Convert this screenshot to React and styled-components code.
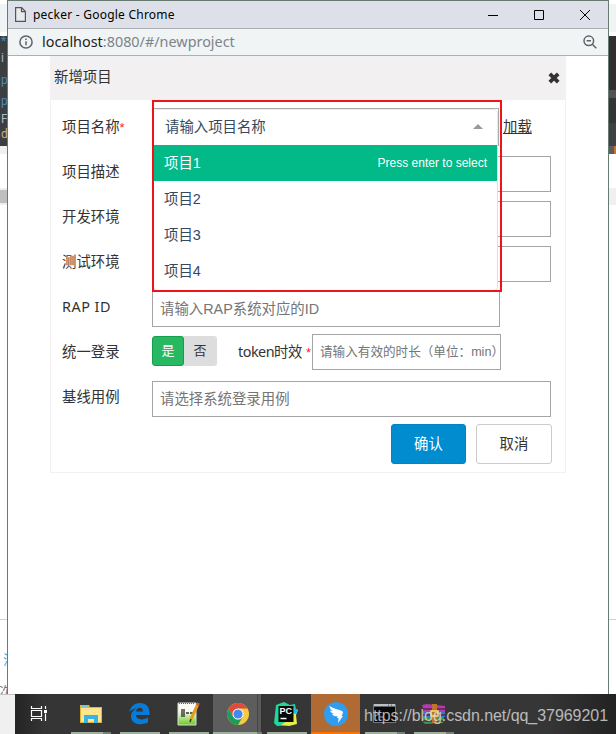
import React from "react";
import styled, { createGlobalStyle } from "styled-components";

const Global = createGlobalStyle`
  * { box-sizing: border-box; }
  body { margin: 0; background: #fff; overflow: hidden; }
  input, button { font-family: inherit; margin: 0; }
`;

const Desktop = styled.div`
  position: relative;
  width: 616px;
  height: 734px;
  display: grid;
  grid-template-columns: 7px 602px 7px;
  grid-template-rows: 694px 40px;
  overflow: hidden;
  font-family: "Noto Sans", "Noto Sans CJK SC", sans-serif;
  color: #333;
`;

const Strip = styled.div`
  display: flex;
  flex-direction: column;
  overflow: hidden;
`;

const Band = styled.div`
  flex: none;
  height: ${(p) => p.$h}px;
  background: ${(p) => p.$c || "#fff"};
`;

const Code = styled(Band)`
  padding-left: ${(p) => p.$x || 0}px;
  overflow: hidden;
  font: 12px/22px "Roboto", sans-serif;
  white-space: pre;
`;

const CodeLine = styled.div`
  height: ${(p) => p.$h}px;
  line-height: ${(p) => p.$h}px;
  color: ${(p) => p.$c};
`;

const Snippet = styled(Band)`
  font: 13px/18px "Noto Sans CJK SC", sans-serif;
  color: ${(p) => p.$ink};
  text-indent: ${(p) => p.$x}px;
  white-space: nowrap;
  overflow: hidden;
`;

const Window = styled.section`
  display: flex;
  flex-direction: column;
  border: 1px solid #687b70;
  border-bottom: 0;
  background: #fff;
  min-width: 0;
`;

const TitleBar = styled.header`
  height: 28px;
  flex: none;
  display: flex;
  align-items: center;
  background: #dde0e8;
  border-bottom: 1px solid #adb0b2;
  padding-left: 7px;
  color: #000;
`;

const WindowTitle = styled.span`
  flex: 1;
  margin-left: 7px;
  font-size: 12px;
  letter-spacing: 0.23px;
`;

const WindowButtons = styled.div`
  display: flex;
`;

const WindowButton = styled.span`
  width: 46px;
  height: 27px;
  display: grid;
  place-items: center;
`;

const AddressBar = styled.div`
  height: 27px;
  flex: none;
  display: flex;
  align-items: center;
  background: #f0f4f5;
  border-bottom: 1px solid #adb0b2;
  padding: 0 11px;
`;

const Url = styled.span`
  flex: 1;
  margin-left: 9px;
  font-size: 14.4px;
  line-height: 26px;
  color: #7d8488;
  b { font-weight: 400; color: #222; }
`;

const Panel = styled.main`
  width: 516px;
  height: 417px;
  margin-left: 42px;
  border: 1px solid #f2f0f1;
  border-top: 0;
`;

const PanelHeader = styled.div`
  height: 44px;
  margin: 0 -1px;
  padding: 0 6px 5px 4px;
  display: flex;
  align-items: center;
  justify-content: space-between;
  background: #f2f0f1;
  font-size: 14.4px;
  svg { margin-top: 5px; }
`;

const Form = styled.form`
  position: relative;
  padding: 5px 13px 0 11px;
`;

const Row = styled.div`
  height: 45px;
  display: flex;
  align-items: flex-start;
`;

const Label = styled.label`
  flex: none;
  width: ${(p) => p.$w || 90}px;
  line-height: 44px;
  font-size: 14.4px;
  letter-spacing: ${(p) => p.$spacing || 0}px;
  white-space: nowrap;
`;

const Required = styled.span`
  color: #f22;
  font-family: "Liberation Sans", sans-serif;
  font-size: 13px;
  letter-spacing: 0;
  margin-left: ${(p) => p.$gap || 0}px;
`;

const Field = styled.input`
  width: ${(p) => p.$w || 399}px;
  height: 36px;
  margin-top: ${(p) => p.$top || 6}px;
  padding: 0 0 0 7px;
  border: 1px solid #a5a5a5;
  border-radius: 0;
  background: #fff;
  outline: 0;
  && { font: ${(p) => p.$size || 14.4}px "Liberation Sans", "Noto Sans CJK SC", sans-serif; }
  &::placeholder { color: #757575; opacity: 1; }
`;

const Select = styled.div`
  width: 347px;
  height: 38px;
  margin-top: 3px;
  border: 1px solid #aaa;
  border-bottom: 0;
`;

const SelectBox = styled.div`
  height: 37px;
  border: 1px solid #e8e8e8;
  border-radius: 5px 5px 0 0;
  padding: 0 14px 5px 11px;
  display: flex;
  align-items: center;
  justify-content: space-between;
  font: 14.4px "Liberation Sans", "Noto Sans CJK SC", sans-serif;
  color: #35495e;
`;

const Caret = styled.i`
  border: 5px solid transparent;
  border-top: 0;
  border-bottom-color: #999;
  margin-top: 3px;
`;

const Menu = styled.ul`
  position: absolute;
  left: 102px;
  top: 45px;
  width: 345px;
  height: 146px;
  margin: 0;
  padding: 0;
  list-style: none;
  background: #fff;
  border: 1px solid #e0e0e0;
  border-top: 0;
  border-radius: 0 0 5px 5px;
`;

const Option = styled.li`
  height: 36px;
  display: flex;
  align-items: center;
  justify-content: space-between;
  padding: 0 10px 3px;
  font: 14.4px "Liberation Sans", "Noto Sans CJK SC", sans-serif;
  color: ${(p) => (p.$active ? "#fff" : "#35495e")};
  background: ${(p) => (p.$active ? "#02b988" : "transparent")};
  small { font-size: 12px; padding-top: 2px; }
`;

const Highlight = styled.div`
  position: absolute;
  left: 101px;
  top: 0;
  width: 350px;
  height: 192px;
  border: 2px solid #f01418;
`;

const LoadLink = styled.a`
  margin-left: 4px;
  line-height: 44px;
  font-size: 14.4px;
  text-decoration: underline;
`;

const Toggle = styled.div`
  display: flex;
  width: 65px;
  height: 30px;
  margin-top: 6px;
  border-radius: 3px;
  background: #ddd;
  overflow: hidden;
`;

const ToggleSide = styled.span`
  width: 32px;
  height: 30px;
  display: grid;
  place-items: center;
  font-size: 13px;
  padding-bottom: 3px;
  color: ${(p) => (p.$on ? "#fff" : "#333")};
  background: ${(p) => (p.$on ? "#28b862" : "transparent")};
  border: 1px solid ${(p) => (p.$on ? "#12a04c" : "transparent")};
  border-radius: 3px;
`;

const Spacer = styled.div`
  width: 21px;
  flex: none;
`;

const Actions = styled.div`
  display: flex;
  justify-content: flex-end;
  gap: 10px;
  padding-top: 4px;
`;

const Button = styled.button`
  width: ${(p) => (p.$primary ? 75 : 76)}px;
  height: 40px;
  padding: 0 0 3px;
  border-radius: 3px;
  font-size: 14.4px;
  border: 1px solid ${(p) => (p.$primary ? "#0284c4" : "#ccc")};
  background: ${(p) => (p.$primary ? "#008ccf" : "#fff")};
  color: ${(p) => (p.$primary ? "#fff" : "#333")};
`;

const Taskbar = styled.footer`
  grid-column: 1 / -1;
  display: flex;
`;

const Margin = styled.div`
  width: 15px;
  background: #f0f0f0;
  border-top: 1px solid #c4c4c4;
`;

const Tray = styled.div`
  position: relative;
  flex: 1;
  display: flex;
  background: linear-gradient(90deg, #242424, #353535 30px, #363636 530px, #222 601px);
`;

const Slot = styled.div`
  width: 49px;
  display: flex;
  flex-direction: column;
  align-items: center;
  justify-content: space-between;
  padding-top: 6px;
  background: ${(p) => p.$bg || "transparent"};
`;

const TaskViewSlot = styled.div`
  width: 51px;
  padding: 11px 0 0 15px;
`;

const Running = styled.div`
  display: flex;
  width: ${(p) => p.$w}px;
  height: 2px;
  background: ${(p) => p.$c || "#a0b09f"};
  border-right: ${(p) => p.$group || 0}px solid #758277;
`;

const Watermark = styled.div`
  position: absolute;
  right: 8px;
  top: 12px;
  font: 16px/20px "Liberation Sans", sans-serif;
  letter-spacing: -0.05px;
  color: rgba(225, 225, 225, 0.78);
  white-space: nowrap;
`;

const Icon = styled.svg`
  display: block;
  flex: none;
`;

const PageIcon = () => (
  <Icon width="11" height="15" viewBox="0 0 11 15" fill="#e8eaee" stroke="#555" strokeWidth="1.2">
    <path d="M.6.7h6l3.8 3.8v9.8H.6zM6.5.7v4h4" />
  </Icon>
);
const InfoIcon = () => (
  <Icon width="14" height="14" viewBox="0 0 14 14" fill="none" stroke="#5f6368" strokeWidth="1.5">
    <circle cx="7" cy="7" r="6.1" /><path d="M7 6.2v4M7 3.6v1.5" />
  </Icon>
);
const ZoomOut = () => (
  <Icon width="14" height="14" viewBox="0 0 14 14" fill="none" stroke="#5f6368" strokeWidth="1.5">
    <circle cx="5.8" cy="5.8" r="4.8" /><path d="M9.3 9.3l4 4M3.6 5.8H8" />
  </Icon>
);
const CloseX = () => (
  <Icon width="12" height="12" viewBox="0 0 12 12" stroke="#333" strokeWidth="3.8">
    <path d="M1.8 1.8l8.4 8.4M10.200 1.8l-8.4 8.4" />
  </Icon>
);

const TaskView = () => (
  <Icon width="18" height="18" viewBox="0 0 18 18" fill="none" stroke="#fff" strokeWidth="1.2">
    <path d="M1.5 1v2.5h10V1M1.5 16v-2.5h10V16M1.5 5.5h10v6h-10zM15.5 1v3M15.5 8.5V16" />
    <path d="M14 5h3v3h-3z" fill="#fff" stroke="none" />
  </Icon>
);
const Explorer = () => (
  <Icon width="22" height="26" viewBox="0 0 22 26">
    <path d="M0 5h9l1 2h12v16H0z" fill="#e3b43b" />
    <path d="M1 8h20v14H1z" fill="#ffe58b" />
    <path d="M2 5.5h5v1.5H2z" fill="#79c7d6" />
    <path d="M4 23v-8h14v8h-4v-4H8v4z" fill="#35b4e5" />
  </Icon>
);
const Edge = () => (
  <Icon width="21" height="26" viewBox="0 0 21 26">
    <path d="M0 12C2 6 6 3 11 3c6 0 9.5 4 9.5 9.5V15H7c.2 5 7.5 5.5 12 2.6v5C12 26 2 24.6 2 16.3 2 12.6 4.3 10 7.5 8.6 5 8.8 2 9.7 0 12zm7-.6h7c0-5-6.300-4.500-7 0z" fill="#087bd8" fillRule="evenodd" />
  </Icon>
);
const Notepad = () => (
  <Icon width="23" height="26" viewBox="0 0 23 26">
    <defs><linearGradient id="pad" x2="0" y2="1"><stop offset=".35" stopColor="#fbfdf5" /><stop offset="1" stopColor="#69c91e" /></linearGradient></defs>
    <path d="M1 3h18v22H1z" fill="url(#pad)" stroke="#d9ddd2" />
    <path d="M2 3.500h16" stroke="#666" strokeDasharray="1 1" />
    <path d="M5 9v8M7 9v8M9 13h3M13 13h3" stroke="#333" strokeWidth="1.4" />
    <path d="M20.500 5L14 19" stroke="#e39c20" strokeWidth="3" /><path d="M21.500 3l-1 2" stroke="#d65b50" strokeWidth="3" /><path d="M14 19l-1 3" stroke="#333" strokeWidth="1.5" />
  </Icon>
);
const Chrome = () => (
  <Icon width="24" height="27" viewBox="0 0 24 27">
    <g transform="translate(12 14)">
      <circle r="11" fill="#fbc940" />
      <path d="M0-5.500H9.530A11 11 0 0 0-9.530-5.500L-4.760 2.750 0 0z" fill="#dc4b3e" />
      <path d="M-9.530-5.500A11 11 0 0 0 0 11L4.760 2.750 0 5.500-4.760 2.750z" fill="#219b5a" />
      <circle r="5.500" fill="#fff" /><circle r="4.600" fill="#4688f1" />
    </g>
  </Icon>
);
const PyCharm = () => (
  <Icon width="25" height="27" viewBox="0 0 25 27">
    <path d="M2 5l8-3 6 3 5-1 1 6-5 15-14 1-3-3z" fill="#22d79a" />
    <path d="M19 8l5 2-2 5 1 9-8 2-8-1 9-6z" fill="#e8ed4a" /><path d="M20 8l4 2-2 4-3-1z" fill="#18b9ee" />
    <path d="M4.500 6h15v16h-15z" fill="#080808" />
    <text x="5.500" y="14" fontFamily="Liberation Sans" fontWeight="700" fontSize="9" fill="#fff">PC</text>
    <path d="M6.500 18.500h6" stroke="#fff" strokeWidth="1.5" />
  </Icon>
);
const Ding = () => (
  <Icon width="24" height="27" viewBox="0 0 24 27">
    <circle cx="12" cy="14" r="12" fill="#2f9df0" />
    <path d="M5.500 6c3 2.500 8 3.200 12.500 5 1.500.8 1 2.200-.5 5h1.500l-5 7 .6-5H13l.5-2c-3 .8-4.500-.2-5.500-2.200l3 .3c-2.700-.8-4.500-2-5-3.700l3 .8C7 9.800 5.700 8.500 5.500 6z" fill="#fff" />
  </Icon>
);
const Terminal = () => (
  <Icon width="23" height="26" viewBox="0 0 23 26">
    <path d="M.5 4.500h22v18H.5z" fill="#080808" stroke="#777" /><path d="M1 4h21v2.500H1z" fill="#bcc1c5" />
    <path d="M15 5.300h1M18 5.300h1" stroke="#4b78a0" strokeWidth="1.500" /><path d="M2 12l4 2-4 2M7 17h4" stroke="#999" fill="none" />
  </Icon>
);
const Rar = () => (
  <Icon width="24" height="27" viewBox="0 0 24 27">
    <path d="M0 5l5-1 18 2v5H2z" fill="#b03da8" /><path d="M1 11h22v6H1z" fill="#3479c5" />
    <path d="M1 17h21l-1 6-18 1-3-3z" fill="#3b9c43" /><path d="M1 9h22M1 15h22M1 21h20" stroke="#651c54" strokeWidth="1.500" />
    <path d="M10 4h5v19h-5z" fill="#be742b" /><path d="M9 11h7v5H9z" fill="none" stroke="#eee36b" strokeWidth="1.500" />
  </Icon>
);

const options = ["项目1", "项目2", "项目3", "项目4"];

const TextRow = ({ label, placeholder, width, spacing }) => (
  <Row><Label $spacing={spacing}>{label}</Label><Field $w={width} placeholder={placeholder} /></Row>
);

export default function App() {
  return (
    <Desktop>
      <Global />
      <Strip>
        <Band $h={4} /><Band $h={28} $c="#f0f4f5" /><Band $h={4} />
        <Code $h={110} $c="#3c3f41" $x={1}>
          <CodeLine $h={10} $c="#4a88b5">*</CodeLine>
          <CodeLine $h={24} $c="#a9b7c6">i</CodeLine>
          <CodeLine $h={20} $c="#4a88b5">p</CodeLine>
          <CodeLine $h={22} $c="#4a88b5">p</CodeLine>
          <CodeLine $h={14} $c="#a9b7c6">F</CodeLine>
          <CodeLine $h={16} $c="#d0b090">d</CodeLine>
        </Code>
        <Band $h={8} $c="#f0f0f0" /><Band $h={34} /><Band $h={2} $c="#eee" /><Band $h={13} $c="#bfbfbf" /><Band $h={2} $c="#eee" />
        <Band $h={414} /><Band $h={1} $c="#d0d0d0" /><Band $h={30} />
        <Snippet $h={18} $ink="#2aa5e8" $x={3}>注</Snippet><Band $h={14} />
        <Snippet $h={12} $ink="#777" $x={-1}>次</Snippet>
      </Strip>
      <Window>
        <TitleBar>
          <PageIcon />
          <WindowTitle>pecker - Google Chrome</WindowTitle>
          <WindowButtons>
            <WindowButton><Icon width="10" height="10"><path d="M0 5.500h10" stroke="#000" /></Icon></WindowButton>
            <WindowButton><Icon width="10" height="10"><path d="M.5.500h9v9h-9z" stroke="#000" fill="none" /></Icon></WindowButton>
            <WindowButton><Icon width="10" height="10"><path d="M0 0l10 10M10 0L0 10" stroke="#000" /></Icon></WindowButton>
          </WindowButtons>
        </TitleBar>
        <AddressBar><InfoIcon /><Url><b>localhost</b>:8080/#/newproject</Url><ZoomOut /></AddressBar>
        <Panel>
          <PanelHeader><span>新增项目</span><CloseX /></PanelHeader>
          <Form>
            <Row>
              <Label>项目名称<Required>*</Required></Label>
              <Select><SelectBox>请输入项目名称<Caret /></SelectBox></Select>
              <LoadLink>加载</LoadLink>
            </Row>
            <TextRow label="项目描述" />
            <TextRow label="开发环境" />
            <TextRow label="测试环境" />
            <TextRow label="RAP ID" spacing={0.5} width={348} placeholder="请输入RAP系统对应的ID" />
            <Row>
              <Label>统一登录</Label>
              <Toggle><ToggleSide $on>是</ToggleSide><ToggleSide>否</ToggleSide></Toggle>
              <Spacer />
              <Label $w={74} $spacing={-0.5}>token时效<Required $gap={4}>*</Required></Label>
              <Field $w={189} $top={4} $size={12.6} placeholder="请输入有效的时长（单位：min）" />
            </Row>
            <TextRow label="基线用例" placeholder="请选择系统登录用例" />
            <Actions><Button type="button" $primary>确认</Button><Button type="button">取消</Button></Actions>
            <Menu>
              {options.map((name, i) => (
                <Option key={name} $active={i === 0}>{name}{i === 0 && <small>Press enter to select</small>}</Option>
              ))}
            </Menu>
            <Highlight />
          </Form>
        </Panel>
      </Window>
      <Strip>
        <Band $h={4} /><Band $h={28} $c="#f0f4f5" /><Band $h={4} />
        <Band $h={54} $c="#303030" /><Band $h={8} $c="#535353" /><Band $h={25} $c="#343536" />
        <Band $h={23} $c="#3e4245" /><Band $h={8} $c="linear-gradient(90deg,#5c5c5c 5px,#c8742c 5px)" /><Band $h={34} /><Band $h={17} $c="#f0f0f0" />
        <Band $h={414} /><Band $h={1} $c="#d0d0d0" />
      </Strip>
      <Taskbar>
        <Margin />
        <Tray>
          <TaskViewSlot><TaskView /></TaskViewSlot>
          <Slot><Explorer /><Running $w={40} $group={8} /></Slot>
          <Slot><Edge /><Running $w={40} /></Slot>
          <Slot><Notepad /><Running $w={40} /></Slot>
          <Slot $bg="linear-gradient(90deg,#5d5d5d 44px,#444 44px 45px,#5a5a5a 45px 48px,#333 48px)"><Chrome /><Running $w={49} $group={5} /></Slot>
          <Slot><PyCharm /><Running $w={40} /></Slot>
          <Slot $bg="#b06a34"><Ding /><Running $w={49} $c="#ff7200" /></Slot>
          <Slot><Terminal /><Running $w={40} $group={8} /></Slot>
          <Slot><Rar /><Running $w={40} $group={8} /></Slot>
          <Watermark>https://blog.csdn.net/qq_37969201</Watermark>
        </Tray>
      </Taskbar>
    </Desktop>
  );
}
